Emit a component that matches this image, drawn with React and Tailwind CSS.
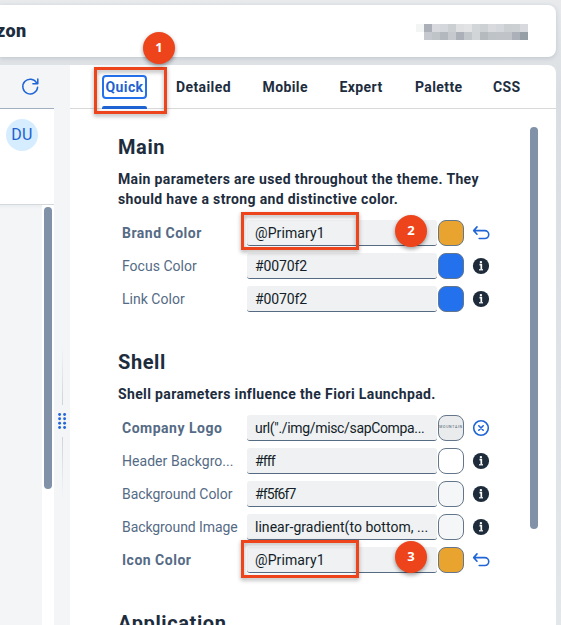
import React from 'react';

const REDACTED = [
  '#f3f5f4', '#abb0b8', '#d7d9de', '#d4d7db', '#cbcfd1', '#dfe0e2', '#e2e3e5', '#d3d6d9', '#cdd1d4', '#d8dade', '#d4d7db', '#cbcfd1', '#ccd0d2', '#d7d9de',
  '#ffffff', '#c5c8ce', '#bfc4c8', '#b2b8bd', '#c6cacf', '#abb0b9', '#c2c7cb', '#d1d5d7', '#b4babe', '#bec3c7', '#c0c4c9', '#c0c4c9', '#abb0b9', '#979fa6',
];

const MAIN = [
  { label: 'Brand Color', bold: true, value: '@Primary1', swatch: 'bg-[#e9a32f]', icon: 'undo', tracking: 'tracking-[0.5px]', spacing: 'tracking-[0.1px]' },
  { label: 'Focus Color', value: '#0070f2', swatch: 'bg-[#2371ec]', icon: 'info', tracking: 'tracking-[0.02px]', spacing: 'tracking-[-0.1px]' },
  { label: 'Link Color', value: '#0070f2', swatch: 'bg-[#2371ec]', icon: 'info', tracking: 'tracking-[0.02px]', spacing: 'tracking-[-0.1px]' },
];

const SHELL = [
  { label: 'Company Logo', bold: true, value: 'url("./img/misc/sapCompa...', swatch: 'bg-[#e9ebed]', icon: 'clear', logo: true, tracking: 'tracking-[0.5px]', spacing: 'tracking-[-0.34px]' },
  { label: 'Header Backgro...', value: '#fff', swatch: 'bg-white', icon: 'info', tracking: 'tracking-[0.05px]', spacing: 'tracking-[-0.9px]' },
  { label: 'Background Color', value: '#f5f6f7', swatch: 'bg-[#f4f6f8]', icon: 'info', tracking: 'tracking-[-0.05px]', spacing: 'tracking-[-0.9px]' },
  { label: 'Background Image', value: 'linear-gradient(to bottom, ...', swatch: 'bg-[#f4f6f8]', icon: 'info', tracking: 'tracking-[-0.08px]', spacing: 'tracking-[0.03px]' },
  { label: 'Icon Color', bold: true, value: '@Primary1', swatch: 'bg-[#e9a32f]', icon: 'undo', tracking: 'tracking-[0.5px]', spacing: 'tracking-[0.1px]' },
];

function RowIcon({ name }) {
  if (name === 'undo') {
    return (
      <svg width="18" height="18" viewBox="0 0 18 18" fill="none" stroke="#1f65d6" strokeWidth="1.6" strokeLinecap="round" strokeLinejoin="round">
        <path d="M5 2.9 1.7 6.6 5 10.2M2 6.6h10.8a3.9 3.9 0 0 1 0 7.9H7.2" />
      </svg>
    );
  }
  if (name === 'clear') {
    return (
      <svg width="18" height="18" viewBox="0 0 18 18" fill="none" stroke="#1f65d6" strokeWidth="1.6" strokeLinecap="round">
        <circle cx="9" cy="9" r="7.3" />
        <path d="m6.8 6.8 4.4 4.4m0-4.4-4.4 4.4" />
      </svg>
    );
  }
  return (
    <svg width="18" height="18" viewBox="0 0 18 18">
      <circle cx="9" cy="9" r="8.1" fill="#1e2b3a" />
      <circle cx="8.9" cy="5.1" r="1.2" fill="#fff" />
      <path d="M7.5 7.6h1.8v5" fill="none" stroke="#fff" strokeWidth="1.7" />
      <path d="M7 12.8h4" fill="none" stroke="#fff" strokeWidth="1.2" />
    </svg>
  );
}

function Row({ row }) {
  return (
    <div className="flex h-[26px] items-center">
      <div className={`w-[125px] shrink-0 whitespace-nowrap text-[14px] leading-5 text-[#556b85] ${row.tracking} ${row.bold ? 'font-bold' : ''}`}>{row.label}</div>
      <div className={`h-[26px] w-[190px] shrink-0 whitespace-nowrap rounded-[3px] border-b border-[#556b82] bg-[#eff1f2] pl-2 text-[14px] leading-[26px] text-[#131e29] ${row.spacing}`}>{row.value}</div>
      <div className={`ml-px flex h-[26px] w-[26px] shrink-0 items-center justify-center overflow-hidden rounded-lg border border-[#64768a] ${row.swatch}`}>
        {row.logo && <span className="text-[3.5px] leading-none tracking-[0.7px] text-[#46586a]">MOUNTAIN</span>}
      </div>
      <div className="ml-2 shrink-0"><RowIcon name={row.icon} /></div>
    </div>
  );
}

function Section({ title, text, rows }) {
  return (
    <section>
      <h2 className="h-6 text-[20px] font-bold leading-6 tracking-[0.6px] text-[#1d2d3e]">{title}</h2>
      {text && <p className="mt-2.5 whitespace-pre text-[14px] font-bold leading-5 tracking-[0.36px] text-[#1d2d3e]">{text}</p>}
      <div className="ml-1 mt-[11px] flex flex-col gap-[7px]">
        {rows.map((row) => <Row key={row.label} row={row} />)}
      </div>
    </section>
  );
}

function Badge({ n, place }) {
  return (
    <div className={`absolute flex h-8 w-8 items-center justify-center rounded-full bg-[#ee441c] pb-px font-['Open_Sans','Liberation_Sans',sans-serif] text-[13px] font-bold text-white shadow-[0_2px_4px_rgba(0,0,0,0.4)] ${place}`}>{n}</div>
  );
}

function Marker({ place }) {
  return (
    <div className={`absolute border-[3px] border-[#ee441c] drop-shadow-[0_2px_2px_rgba(0,0,0,0.35)] ${place}`} />
  );
}

export default function App() {
  return (
    <div className="relative flex h-[625px] w-[561px] flex-col overflow-hidden bg-linear-to-b from-[#e8eaec] via-[#dadee2] via-15% to-[#e4e7ea] font-['Roboto','Liberation_Sans',sans-serif]">
      <header className="mt-[5px] flex h-[52px] w-[556px] shrink-0 items-start justify-between rounded-r-lg bg-white shadow-[0_1px_4px_rgba(85,107,130,0.25)]">
        <div className="-ml-[4px] mt-[14px] text-[18px] font-black leading-6 tracking-[0.4px] text-[#1d2d3e]">zon</div>
        <div className="mr-7 mt-[19px] grid grid-cols-14">
          {REDACTED.map((color, i) => <i key={i} className="block h-2 w-2" style={{ backgroundColor: color }} />)}
        </div>
      </header>

      <main className="mt-2 flex h-[560px] w-[556px] shrink-0 overflow-hidden rounded-tr-lg">
        <aside className="flex w-[54px] shrink-0 flex-col bg-[#f4f5f7]">
          <div className="flex h-11 shrink-0 items-center border-b border-[#a2afc3] pl-[21px]">
            <svg width="19" height="19" viewBox="0 0 19 19" fill="none" stroke="#1f65d6" strokeWidth="1.5" strokeLinecap="round" strokeLinejoin="round">
              <path d="M16.6 10.2A7.4 7.4 0 1 1 15.7 6M16.8 2.1v4.7h-4.9" />
            </svg>
          </div>
          <div className="h-24 shrink-0 border-b border-[#d5d9dd] bg-white pl-1.5 pt-2.5">
            <div className="flex h-8 w-8 items-center justify-center rounded-full bg-[#d6edff] text-[16px] tracking-[0.3px] text-[#2162cf]">DU</div>
          </div>
          <div className="flex flex-1 bg-linear-to-b from-[#e9edf0] to-[#f4f5f7] to-[4px]">
            <div className="w-[42px]" />
            <div className="w-3 bg-white pl-0.5 pt-0.5">
              <div className="h-[282px] w-2 rounded-full bg-[#8091a8]" />
            </div>
          </div>
        </aside>

        <div className="flex w-4 shrink-0 flex-col items-center bg-[#f4f5f7] pt-[280px]">
          <div className="h-[60px] w-px bg-linear-to-t from-[#cfd4d9] to-transparent" />
          <svg className="my-2" width="10" height="16" viewBox="0 0 10 16" fill="#2465d8">
            {[1.5, 5.8, 10.2, 14.5].map((y) => (
              <g key={y}><circle cx="2.6" cy={y} r="1.45" /><circle cx="7.6" cy={y} r="1.45" /></g>
            ))}
          </svg>
          <div className="h-[62px] w-px bg-linear-to-b from-[#cfd4d9] to-transparent" />
        </div>

        <div className="flex min-w-0 flex-1 flex-col bg-white">
          <nav className="flex h-11 shrink-0 border-b border-[#d9d9d9] pl-8 text-[14px] font-bold tracking-[0.4px] text-[#1d2d3e]">
            <div className="w-[74px]">
              <div className="flex h-11 w-[45px] flex-col justify-between pt-2.5">
                <div className="flex h-6 items-center justify-center rounded border-2 border-[#2371ec] text-[#1f62d1]">Quick</div>
                <div className="h-[3px] rounded-t-[2px] bg-[#1f62d1]" />
              </div>
            </div>
            <div className="w-[86.5px] leading-[44px]">Detailed</div>
            <div className="w-[77px] leading-[44px]">Mobile</div>
            <div className="w-[75.5px] leading-[44px]">Expert</div>
            <div className="w-[78px] leading-[44px]">Palette</div>
            <div className="leading-[44px]">CSS</div>
          </nav>
          <div className="flex min-h-0 flex-1 justify-between overflow-hidden">
            <div className="flex flex-col gap-[38px] pl-12 pt-[26px]">
              <Section title="Main" text={'Main parameters are used throughout the theme. They\nshould have a strong and distinctive color.'} rows={MAIN} />
              <Section title="Shell" text="Shell parameters influence the Fiori Launchpad." rows={SHELL} />
              <Section title="Application" rows={[]} />
            </div>
            <div className="mr-[18px] mt-[18px] h-[402px] w-2 shrink-0 rounded-full bg-[#8091a8]" />
          </div>
        </div>
      </main>

      <Marker place="left-[94px] top-[67px] h-[47px] w-[73px]" />
      <Marker place="left-[241px] top-[212px] h-[38px] w-[118px]" />
      <Marker place="left-[241px] top-[540px] h-[38px] w-[118px]" />
      <Badge n="1" place="left-[143px] top-8" />
      <Badge n="2" place="left-[395px] top-[215px]" />
      <Badge n="3" place="left-[395px] top-[541px]" />
    </div>
  );
}
